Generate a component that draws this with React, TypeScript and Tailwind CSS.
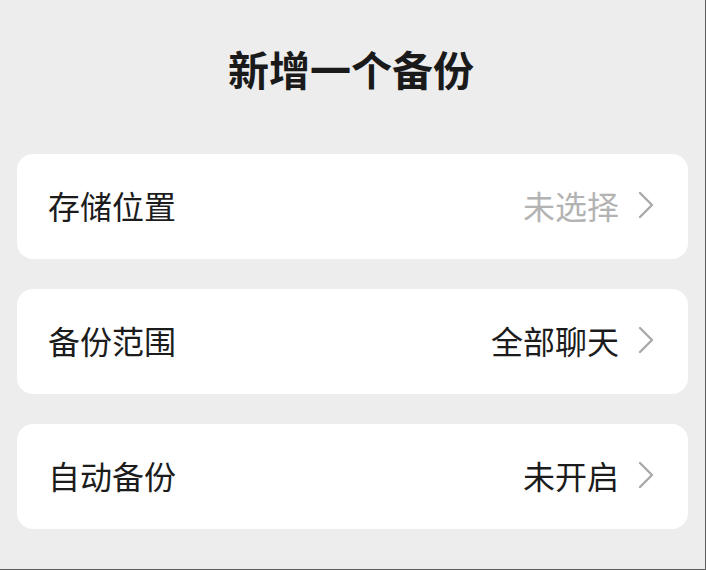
import React from "react";

const font = { fontFamily: '"Noto Sans CJK SC", "Noto Sans", sans-serif' };

function Chevron() {
  return (
    <svg width="16" height="28" viewBox="0 0 16 28" fill="none" className="shrink-0">
      <polyline points="2,2 14,14 2,26" stroke="#a9a9a9" strokeWidth="2.4" strokeLinecap="round" strokeLinejoin="round" />
    </svg>
  );
}

function Row({ label, value, muted }: { label: string; value: string; muted?: boolean }) {
  return (
    <div className="flex h-[105px] items-center justify-between rounded-[16px] bg-white pb-[4px] pl-[31px] pr-[34px]">
      <span className="text-[32px] leading-none text-[#1c1c1c]">{label}</span>
      <div className="flex items-center gap-[19px]">
        <span className={"text-[32px] leading-none " + (muted ? "text-[#b3b3b3]" : "text-[#1c1c1c]")}>{value}</span>
        <Chevron />
      </div>
    </div>
  );
}

export default function App() {
  return (
    <div
      className="flex h-[570px] w-[706px] flex-col border-b border-r border-[#5c5c5c] bg-[#ededed] px-[17px]"
      style={font}
    >
      <div className="mt-[48px] mb-[65px] pr-[3px] text-center text-[41px] font-bold leading-[41px] text-[#1a1a1a]">
        新增一个备份
      </div>
      <div className="flex flex-col gap-[30px]">
        <Row label="存储位置" value="未选择" muted />
        <Row label="备份范围" value="全部聊天" />
        <Row label="自动备份" value="未开启" />
      </div>
    </div>
  );
}
